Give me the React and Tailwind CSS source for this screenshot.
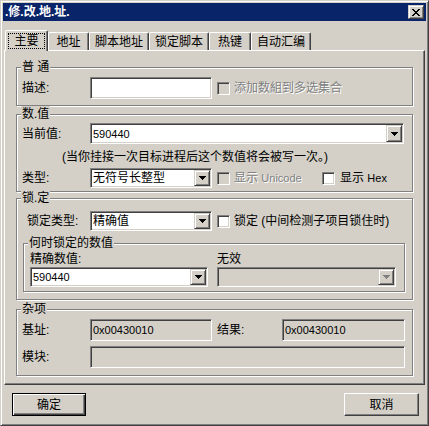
import React from "react";

const SUNKEN =
  "border border-t-[#808080] border-l-[#808080] border-r-white border-b-white shadow-[inset_1px_1px_0_#404040,inset_-1px_-1px_0_#d4d0c8]";
const RAISED_SM =
  "border border-t-[#d4d0c8] border-l-[#d4d0c8] border-r-[#404040] border-b-[#404040] shadow-[inset_1px_1px_0_#fff,inset_-1px_-1px_0_#808080]";
const DIS = "text-[#808080] [text-shadow:1px_1px_0_#fff]";

function Arrow({ disabled }) {
  return (
    <svg width="7" height="4" viewBox="0 0 7 4" shapeRendering="crispEdges">
      <path
        d="M0 0h7v1H0z M1 1h5v1H1z M2 2h3v1H2z M3 3h1v1H3z"
        fill={disabled ? "#808080" : "#000"}
      />
    </svg>
  );
}

function Combo({ className, value, disabled, latin }) {
  return (
    <div
      className={`${SUNKEN} ${disabled ? "bg-[#d4d0c8]" : "bg-white"} flex items-stretch p-[1px] ${className}`}
    >
      <div className="flex-1 flex items-center pl-[1px] overflow-hidden whitespace-nowrap">
        <span className={latin ? "text-[11px]" : ""}>{value}</span>
      </div>
      <div className={`${RAISED_SM} w-[16px] bg-[#d4d0c8] flex items-center justify-center`}>
        <Arrow disabled={disabled} />
      </div>
    </div>
  );
}

function Edit({ className, value, gray }) {
  return (
    <div
      className={`${SUNKEN} ${gray ? "bg-[#d4d0c8]" : "bg-white"} flex items-center pl-[2px] whitespace-nowrap ${className}`}
    >
      {value ? <span className="text-[11px]">{value}</span> : null}
    </div>
  );
}

function Check({ disabled }) {
  return (
    <div
      className={`${SUNKEN} w-[13px] h-[13px] shrink-0 ${disabled ? "bg-[#d4d0c8]" : "bg-white"}`}
    />
  );
}

function Group({ title, className, children }) {
  return (
    <div
      className={`relative border border-[#808080] shadow-[1px_1px_0_#fff,inset_1px_1px_0_#fff] ${className}`}
    >
      <span className="absolute left-[4px] -top-[9px] bg-[#d4d0c8] px-[1px] leading-[16px] whitespace-nowrap">
        {title}
      </span>
      {children}
    </div>
  );
}

function Tab({ label, className }) {
  return (
    <div
      className={`h-[18px] border-l border-t border-r border-l-white border-t-white border-r-[#404040] shadow-[inset_-1px_0_0_#808080] rounded-tl-[2px] rounded-tr-[2px] flex items-center justify-center leading-[16px] whitespace-nowrap ${className}`}
    >
      {label}
    </div>
  );
}

export default function App() {
  return (
    <div className="w-[429px] h-[426px] bg-[#d4d0c8] text-[12px] leading-[16px] text-black [font-family:'Liberation_Sans','Noto_Sans_CJK_SC',sans-serif]">
      <div className="w-[429px] h-[426px] border border-t-[#d4d0c8] border-l-[#d4d0c8] border-r-[#404040] border-b-[#404040] shadow-[inset_1px_1px_0_#fff,inset_-1px_-1px_0_#808080] p-[2px] flex flex-col">
        {/* Title bar */}
        <div className="h-[18px] shrink-0 bg-[#0a246a] flex items-center justify-between pl-[2px] pr-[2px]">
          <span className="text-white font-bold text-[12px] leading-[16px]">
            .修.改.地.址.
          </span>
          <div className={`${RAISED_SM} w-[16px] h-[14px] bg-[#d4d0c8] flex items-center justify-center`}>
            <svg width="8" height="7" viewBox="0 0 8 7" shapeRendering="crispEdges">
              <path
                d="M0 0h2v1H0z M6 0h2v1H6z M1 1h2v1H1z M5 1h2v1H5z M2 2h4v1H2z M3 3h2v1H3z M2 4h4v1H2z M1 5h2v1H1z M5 5h2v1H5z M0 6h2v1H0z M6 6h2v1H6z"
                fill="#000"
              />
            </svg>
          </div>
        </div>

        {/* Tabs */}
        <div className="mt-[9px] ml-[2px] h-[20px] flex items-end shrink-0">
          <div className="relative z-10 -mb-px h-[21px] w-[43px] bg-[#d4d0c8] border-l border-t border-r border-l-white border-t-white border-r-[#404040] shadow-[inset_-1px_0_0_#808080] rounded-tl-[2px] rounded-tr-[2px] flex justify-center pt-[2px]">
            <span className="h-[16px] border border-dotted border-black px-[5px] leading-[14px] whitespace-nowrap">
              主要
            </span>
          </div>
          <Tab label="地址" className="w-[41px]" />
          <Tab label="脚本地址" className="w-[60px]" />
          <Tab label="锁定脚本" className="w-[60px]" />
          <Tab label="热键" className="w-[42px]" />
          <Tab label="自动汇编" className="w-[60px]" />
        </div>

        {/* Panel */}
        <div className="ml-[1px] w-[421px] h-[335px] shrink-0 border border-t-white border-l-white border-r-[#404040] border-b-[#404040] shadow-[inset_-1px_-1px_0_#808080] px-[11px] pt-[16px] flex flex-col">
          {/* 普通 */}
          <Group title="普 通" className="h-[39px] shrink-0">
            <div className="pt-[9px] pl-[5px] flex items-center">
              <span className="w-[68px]">描述:</span>
              <Edit className="w-[122px] h-[22px]" />
              <div className="ml-[5px] flex items-center">
                <Check disabled />
                <span className={`ml-[4px] ${DIS}`}>添加数組到多选集合</span>
              </div>
            </div>
          </Group>

          {/* 数值 */}
          <Group title="数.值" className="h-[78px] mt-[8px] shrink-0">
            <div className="pt-[8px] pl-[5px]">
              <div className="flex items-center">
                <span className="w-[68px]">当前值:</span>
                <Combo className="w-[314px] h-[21px]" value="590440" latin />
              </div>
              <div className="mt-[5px] ml-[40px] h-[16px] whitespace-nowrap">
                (当你挂接一次目标进程后这个数值将会被写一次。)
              </div>
              <div className="mt-[3px] flex items-center">
                <span className="w-[68px]">类型:</span>
                <Combo className="w-[122px] h-[20px]" value="无符号长整型" />
                <div className="ml-[5px] w-[105px] flex items-center">
                  <Check disabled />
                  <span className={`ml-[4px] ${DIS}`}>
                    显示 <span className="text-[11px]">Unicode</span>
                  </span>
                </div>
                <div className="flex items-center">
                  <Check />
                  <span className="ml-[5px]">
                    显示 <span className="text-[11px]">Hex</span>
                  </span>
                </div>
              </div>
            </div>
          </Group>

          {/* 锁定 */}
          <Group title="锁.定" className="h-[102px] mt-[6px] shrink-0">
            <div className="pt-[12px]">
              <div className="flex items-center">
                <span className="pl-[10px] w-[73px]">锁定类型:</span>
                <Combo className="w-[122px] h-[20px]" value="精确值" />
                <div className="ml-[5px] flex items-center">
                  <Check />
                  <span className="ml-[4px] whitespace-nowrap">锁定 (中间检测子项目锁住时)</span>
                </div>
              </div>
              <Group title="何时锁定的数值" className="mt-[12px] ml-[6px] w-[382px] h-[49px]">
                <div className="pt-[7px] pl-[6px] flex">
                  <div className="w-[178px] flex flex-col">
                    <span className="h-[16px]">精确数值:</span>
                    <Combo className="w-[178px] h-[20px]" value="590440" latin />
                  </div>
                  <div className="ml-[9px] w-[179px] flex flex-col">
                    <span className="h-[16px]">无效</span>
                    <Combo className="w-[179px] h-[20px]" value="" disabled />
                  </div>
                </div>
              </Group>
            </div>
          </Group>

          {/* 杂项 */}
          <Group title="杂项" className="h-[67px] mt-[9px] shrink-0">
            <div className="pt-[9px] pl-[5px]">
              <div className="flex items-center">
                <span className="w-[68px]">基址:</span>
                <Edit className="w-[122px] h-[22px]" value="0x00430010" gray />
                <span className="ml-[5px] w-[65px]">结果:</span>
                <Edit className="w-[123px] h-[22px]" value="0x00430010" gray />
              </div>
              <div className="mt-[5px] flex items-center">
                <span className="w-[68px]">模块:</span>
                <Edit className="w-[315px] h-[22px]" gray />
              </div>
            </div>
          </Group>
        </div>

        {/* Buttons */}
        <div className="mt-[8px] pl-[9px] pr-[7px] flex justify-between">
          <div className="w-[74px] h-[23px] border border-black shadow-[inset_1px_1px_0_#fff,inset_-1px_-1px_0_#404040,inset_-2px_-2px_0_#808080] flex items-center justify-center">
            确定
          </div>
          <div className="w-[75px] h-[23px] border border-t-white border-l-white border-r-[#404040] border-b-[#404040] shadow-[inset_-1px_-1px_0_#808080] flex items-center justify-center">
            取消
          </div>
        </div>
      </div>
    </div>
  );
}
